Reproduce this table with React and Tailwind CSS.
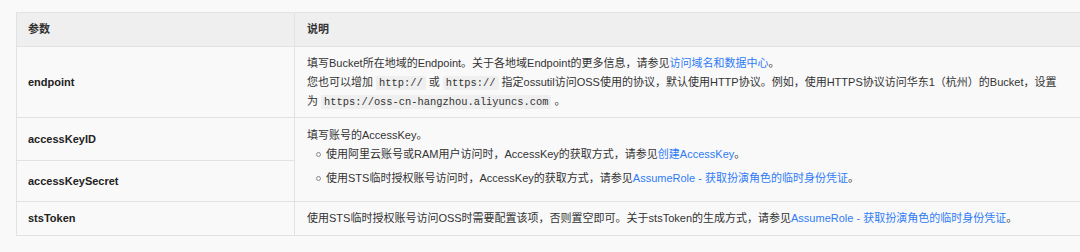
import React from "react";

const Code = ({ children }) => (
  <code className="mx-[3px] rounded-[2px] bg-[#efefef] px-[3px] py-[1px] font-['Liberation_Mono',monospace] text-[10.4px] leading-none text-[#333]">
    {children}
  </code>
);

const A = ({ children }) => <a className="text-[#2f7bf5] no-underline">{children}</a>;

export default function App() {
  const td = "border border-[#e2e2e2] align-middle";
  return (
    <div className="h-[252px] w-[1080px] overflow-hidden bg-[#f9f9f9] pt-[12px] pl-[16px] font-['Liberation_Sans','Noto_Sans_CJK_SC',sans-serif] text-[11px] leading-[19px] text-[#333]">
      <table className="w-[1080px] border-collapse">
        <colgroup>
          <col className="w-[278px]" />
          <col />
        </colgroup>
        <thead>
          <tr className="bg-[#efefef]">
            <th className={`${td} h-[34px] px-[11px] text-left font-bold text-[#333]`}>参数</th>
            <th className={`${td} px-[12px] text-left font-bold text-[#333]`}>说明</th>
          </tr>
        </thead>
        <tbody>
          <tr>
            <td className={`${td} px-[11px] font-bold text-[#222]`}>endpoint</td>
            <td className={`${td} px-[12px] pt-[7px] pb-[6px]`}>
              填写Bucket所在地域的Endpoint。关于各地域Endpoint的更多信息，请参见<A>访问域名和数据中心</A>。
              <br />
              您也可以增加<Code>http://</Code>或<Code>https://</Code>指定ossutil访问OSS使用的协议，默认使用HTTP协议。例如，使用HTTPS协议访问华东1（杭州）的Bucket，设置
              <br />
              为<Code>https://oss-cn-hangzhou.aliyuncs.com</Code>。
            </td>
          </tr>
          <tr>
            <td className={`${td} h-[43px] px-[11px] font-bold text-[#222]`}>accessKeyID</td>
            <td className={`${td} px-[12px] py-[2px]`} rowSpan={2}>
              <div>填写账号的AccessKey。</div>
              <ul className="m-0 p-0">
                <li className="mb-[5px] flex items-center">
                  <span className="ml-[9px] mr-[5px] inline-block h-[5px] w-[5px] rounded-full border border-[#888]" />
                  <span>
                    使用阿里云账号或RAM用户访问时，AccessKey的获取方式，请参见<A>创建AccessKey</A>。
                  </span>
                </li>
                <li className="mb-[5px] flex items-center">
                  <span className="ml-[9px] mr-[5px] inline-block h-[5px] w-[5px] rounded-full border border-[#888]" />
                  <span>
                    使用STS临时授权账号访问时，AccessKey的获取方式，请参见<A>AssumeRole - 获取扮演角色的临时身份凭证</A>。
                  </span>
                </li>
              </ul>
            </td>
          </tr>
          <tr>
            <td className={`${td} h-[41px] px-[11px] font-bold text-[#222]`}>accessKeySecret</td>
          </tr>
          <tr>
            <td className={`${td} h-[34px] px-[11px] font-bold text-[#222]`}>stsToken</td>
            <td className={`${td} px-[12px]`}>
              使用STS临时授权账号访问OSS时需要配置该项，否则置空即可。关于stsToken的生成方式，请参见<A>AssumeRole - 获取扮演角色的临时身份凭证</A>。
            </td>
          </tr>
        </tbody>
      </table>
    </div>
  );
}
